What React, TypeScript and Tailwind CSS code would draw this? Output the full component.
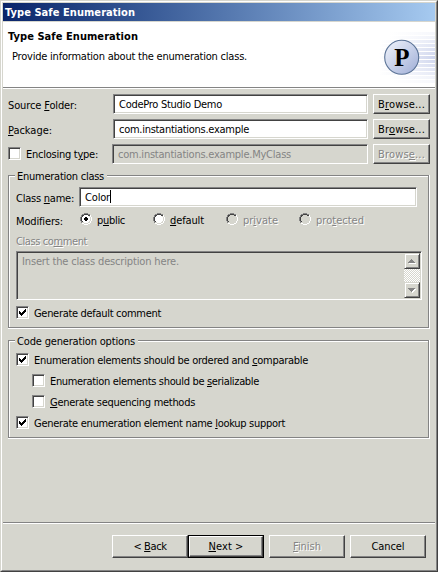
import { useLayoutEffect, useRef, useState } from "react";
import type { ReactNode } from "react";
import clsx from "clsx";

/* Caption whose tracking is adjusted to fill a fixed width; "&" marks the mnemonic letter. */
function Caption({ text, width, className }: { text: string; width: number; className?: string }) {
  const ref = useRef<HTMLSpanElement>(null);
  const [tracking, setTracking] = useState(0);
  useLayoutEffect(() => {
    if (ref.current) {
      const natural = ref.current.getBoundingClientRect().width;
      setTracking((width - natural) / text.replace("&", "").length);
    }
  }, [text, width]);
  const i = text.indexOf("&");
  return (
    <span className={clsx("block h-[14px] shrink-0 leading-[16px] whitespace-pre", className)} style={{ width }}>
      <span ref={ref} style={{ letterSpacing: tracking }}>
        {i < 0 ? (
          text
        ) : (
          <>
            {text.slice(0, i)}
            <span className="underline decoration-1 underline-offset-[1px]">{text[i + 1]}</span>
            {text.slice(i + 2)}
          </>
        )}
      </span>
    </span>
  );
}

const emboss = "text-[#848484] [text-shadow:1px_1px_0_#fff]";
const sunken =
  "border border-t-[#848484] border-l-[#848484] border-r-white border-b-white shadow-[inset_1px_1px_0_#424242,inset_-1px_-1px_0_#d6d6ce]";
const raised =
  "border border-t-white border-l-white border-r-[#424242] border-b-[#424242] shadow-[inset_-1px_-1px_0_#848484]";

function Field({ className, children }: { className?: string; children?: ReactNode }) {
  return <div className={clsx("flex shrink-0 border", sunken, className)}>{children}</div>;
}

function Button({ className, children }: { className?: string; children: ReactNode }) {
  return <div className={clsx("flex shrink-0 justify-center bg-[#d6d6ce]", raised, className)}>{children}</div>;
}

function Check({ checked }: { checked?: boolean }) {
  return (
    <div className={clsx("h-[13px] w-[13px] shrink-0 bg-white", sunken)}>
      {checked && (
        <svg width="11" height="11" viewBox="0 0 11 11" shapeRendering="crispEdges" className="block">
          <path d="M2 4h1v3h-1zM3 5h1v3h-1zM4 6h1v3h-1zM5 5h1v3h-1zM6 4h1v3h-1zM7 3h1v3h-1zM8 2h1v3h-1z" />
        </svg>
      )}
    </div>
  );
}

function Radio({ text, width, on, disabled }: { text: string; width: number; on?: boolean; disabled?: boolean }) {
  return (
    <div className="flex w-[73px] shrink-0">
      <svg width="12" height="12" viewBox="0 0 12 12" className="shrink-0" shapeRendering="crispEdges">
        <path d="M4 1h4v1h2v2h1v4h-1v2h-2v1h-4v-1h-2v-2h-1v-4h1v-2h2z" fill={disabled ? "#d6d6ce" : "#fff"} />
        <path d="M4 0h4v1h-4zM2 1h2v1h-2zM8 1h2v1h-2zM1 2h1v2h-1zM0 4h1v4h-1zM1 8h1v2h-1z" fill="#848484" />
        <path d="M4 1h4v1h-4zM2 2h2v1h-2zM8 2h2v1h-2zM2 3h1v1h-1zM1 4h1v4h-1zM2 8h1v1h-1z" fill="#424242" />
        <path d="M4 10h4v1h-4zM2 9h2v1h-2zM8 9h2v1h-2zM9 8h1v1h-1zM10 4h1v4h-1zM9 3h1v1h-1z" fill="#d6d6ce" />
        <path d="M4 11h4v1h-4zM2 10h2v1h-2zM8 10h2v1h-2zM10 8h1v2h-1zM11 4h1v4h-1zM10 2h1v2h-1z" fill="#fff" />
        {on && <path d="M5 4h2v1h1v2h-1v1h-2v-1h-1v-2h1z" fill="#000" />}
      </svg>
      <Caption text={text} width={width} className={clsx("ml-[5px]", disabled && emboss)} />
    </div>
  );
}

function Option({ text, width, checked, className }: { text: string; width: number; checked?: boolean; className?: string }) {
  return (
    <div className={clsx("flex h-[13px]", className)}>
      <Check checked={checked} />
      <Caption text={text} width={width} className="ml-[5px]" />
    </div>
  );
}

/* Etched frame: a grey line with a white line one pixel below and to the right. */
function Group({ title, width, className, children }: { title: string; width: number; className?: string; children: ReactNode }) {
  return (
    <div className={clsx("ml-[5px] w-[422px] shrink-0 border-r border-b border-white", className)}>
      <div className="h-full border border-[#848484] shadow-[inset_1px_1px_0_#fff]">
        <div className="-mt-[7px] ml-[6px] flex w-max bg-[#d6d6ce] pr-[3px] pl-[2px]">
          <Caption text={title} width={width} />
        </div>
        {children}
      </div>
    </div>
  );
}

function ScrollButton({ up }: { up?: boolean }) {
  return (
    <div className="h-[16px] w-[16px] border border-t-[#d6d6ce] border-l-[#d6d6ce] border-r-[#424242] border-b-[#424242] bg-[#d6d6ce] shadow-[inset_1px_1px_0_#fff,inset_-1px_-1px_0_#848484]">
      <svg width="14" height="14" viewBox="0 0 14 14" shapeRendering="crispEdges" className="block">
        {up ? (
          <>
            <path d="M4 9h7v1h-7z" fill="#fff" />
            <path d="M6 5h1v1h-1zM5 6h3v1h-3zM4 7h5v1h-5zM3 8h7v1h-7z" fill="#848484" />
          </>
        ) : (
          <>
            <path d="M4 6h7v1h-1v1h-1v1h-1v1h-1v-1z" fill="#fff" />
            <path d="M3 5h7v1h-7zM4 6h5v1h-5zM5 7h3v1h-3zM6 8h1v1h-1z" fill="#848484" />
          </>
        )}
      </svg>
    </div>
  );
}

function Logo() {
  return (
    <svg width="64" height="65" viewBox="0 0 64 65" className="shrink-0">
      <defs>
        <linearGradient id="stripe">
          <stop offset="0" stopColor="#fff" />
          <stop offset="1" stopColor="#c6ceea" />
        </linearGradient>
        <linearGradient id="disc" x1="0" y1="0" x2="1" y2="1">
          <stop offset="0" stopColor="#f2f5fc" />
          <stop offset="0.5" stopColor="#c9d2ea" />
          <stop offset="1" stopColor="#9eacd6" />
        </linearGradient>
      </defs>
      {Array.from({ length: 13 }, (_, k) => (
        <rect key={k} x={k < 2 || k > 10 ? 18 : 8} y={10 + k * 4} width={64} height={3} fill="url(#stripe)" opacity={1 - Math.abs(k - 6) * 0.13} />
      ))}
      <circle cx="30.7" cy="35.3" r="17" fill="url(#disc)" stroke="#5b7396" strokeWidth="1.1" />
      <text x="23.3" y="43.8" fontSize="25" fontWeight="700" fontFamily="Liberation Serif, serif">P</text>
    </svg>
  );
}

export default function App() {
  return (
    <div className="h-[572px] w-[438px] border border-t-[#d6d6ce] border-l-[#d6d6ce] border-r-[#424242] border-b-[#424242] bg-[#d6d6ce] font-['DejaVu_Sans_Condensed','DejaVu_Sans',sans-serif] text-[11px] text-black [font-stretch:condensed]">
      <div className="flex h-full flex-col border border-t-white border-l-white border-r-[#848484] border-b-[#848484] pt-px pr-px pl-px">
        <div className="flex h-[18px] shrink-0 bg-linear-to-r from-[#0a246a] to-[#a6caf0] pt-[2px] pl-[2px] font-bold text-white">
          <Caption text="Type Safe Enumeration" width={130} />
        </div>
        <div className="mt-px flex h-[67px] shrink-0 justify-between border-b border-white bg-white shadow-[inset_0_-1px_0_#848484]">
          <div className="pt-[7px] pl-[5px]">
            <Caption text="Type Safe Enumeration" width={130} className="font-bold" />
            <Caption text="Provide information about the enumeration class." width={235} className="mt-[6px] ml-[4px]" />
          </div>
          <Logo />
        </div>

        <div className="mt-[5px] flex h-[20px] shrink-0 pl-[5px]">
          <Caption text="Source &Folder:" width={69} className="mt-[4px] mr-[36px]" />
          <Field className="h-[20px] w-[255px] bg-white pt-[2px] pl-[5px]">
            <Caption text="CodePro Studio Demo" width={103} />
          </Field>
          <Button className="ml-[5px] h-[20px] w-[57px] pt-[2px]">
            <Caption text="B&rowse..." width={47} />
          </Button>
        </div>
        <div className="mt-[5px] flex h-[20px] shrink-0 pl-[5px]">
          <Caption text="&Package:" width={44} className="mt-[4px] mr-[61px]" />
          <Field className="h-[20px] w-[255px] bg-white pt-[2px] pl-[5px]">
            <Caption text="com.instantiations.example" width={130} />
          </Field>
          <Button className="ml-[5px] h-[20px] w-[57px] pt-[2px]">
            <Caption text="Br&owse..." width={47} />
          </Button>
        </div>
        <div className="mt-[5px] flex h-[20px] shrink-0 pl-[5px]">
          <div className="mt-[3px] flex w-[104px]">
            <Check />
            <Caption text="Enclosing t&ype:" width={72} className="ml-[5px]" />
          </div>
          <Field className="h-[20px] w-[256px] pt-[2px] pl-[5px] text-[#848484]">
            <Caption text="com.instantiations.example.MyClass" width={173} />
          </Field>
          <Button className="ml-[5px] h-[20px] w-[57px] pt-[2px]">
            <Caption text="Brows&e..." width={47} className={emboss} />
          </Button>
        </div>

        <Group title="Enumeration class" width={87} className="mt-[11px] h-[154px]">
          <div className="mt-[4px] flex h-[20px] pl-[7px]">
            <Caption text="Class &name:" width={58} className="mt-[4px] mr-[5px]" />
            <Field className="h-[20px] w-[338px] bg-white pt-[2px] pl-[5px]">
              <Caption text="Color" width={25} />
              <div className="h-[13px] w-px bg-black" />
            </Field>
          </div>
          <div className="mt-[6px] flex h-[12px] pl-[7px]">
            <Caption text="Modifiers:" width={47} className="mt-px mr-[17px]" />
            <Radio text="p&ublic" width={28} on />
            <Radio text="&default" width={34} />
            <Radio text="pr&ivate" width={35} disabled />
            <Radio text="pro&tected" width={48} disabled />
          </div>
          <Caption text="Class co&mment" width={71} className={clsx("mt-[9px] ml-[7px]", emboss)} />
          <div className={clsx("mt-[3px] ml-[7px] flex h-[49px] w-[406px] justify-between pl-[5px] text-[#848484]", sunken)}>
            <Caption text="Insert the class description here." width={157} className="mt-[2px]" />
            <div className="mt-px mr-px flex h-[45px] w-[16px] flex-col justify-between bg-[repeating-conic-gradient(#fff_0_25%,#d6d6ce_0_50%)] bg-size-[2px_2px]">
              <ScrollButton up />
              <ScrollButton />
            </div>
          </div>
          <Option text="Generate default comment" width={127} checked className="mt-[6px] ml-[7px]" />
        </Group>

        <Group title="Code generation options" width={118} className="mt-[11px] h-[99px]">
          <Option text="Enumeration elements should be ordered and &comparable" width={274} checked className="mt-[5px] ml-[7px]" />
          <Option text="Enumeration elements should be &serializable" width={209} className="mt-[8px] ml-[23px]" />
          <Option text="&Generate sequencing methods" width={145} className="mt-[8px] ml-[23px]" />
          <Option text="Generate enumeration element name &lookup support" width={251} checked className="mt-[8px] ml-[7px]" />
        </Group>

        <div className="mt-[83px] h-[2px] shrink-0 border-t border-b border-t-[#848484] border-b-white" />
        <div className="mt-[11px] flex shrink-0 pl-[109px]">
          <Button className="h-[23px] w-[76px] pt-[3px]">
            <Caption text="< &Back" width={33} />
          </Button>
          <div className="border border-black">
            <Button className="h-[21px] w-[74px] pt-[2px]">
              <Caption text="&Next >" width={35} />
            </Button>
          </div>
          <Button className="ml-[5px] h-[23px] w-[76px] pt-[3px]">
            <Caption text="&Finish" width={28} className={emboss} />
          </Button>
          <Button className="ml-[5px] h-[23px] w-[76px] pt-[3px]">
            <Caption text="Cancel" width={33} />
          </Button>
        </div>
      </div>
    </div>
  );
}
